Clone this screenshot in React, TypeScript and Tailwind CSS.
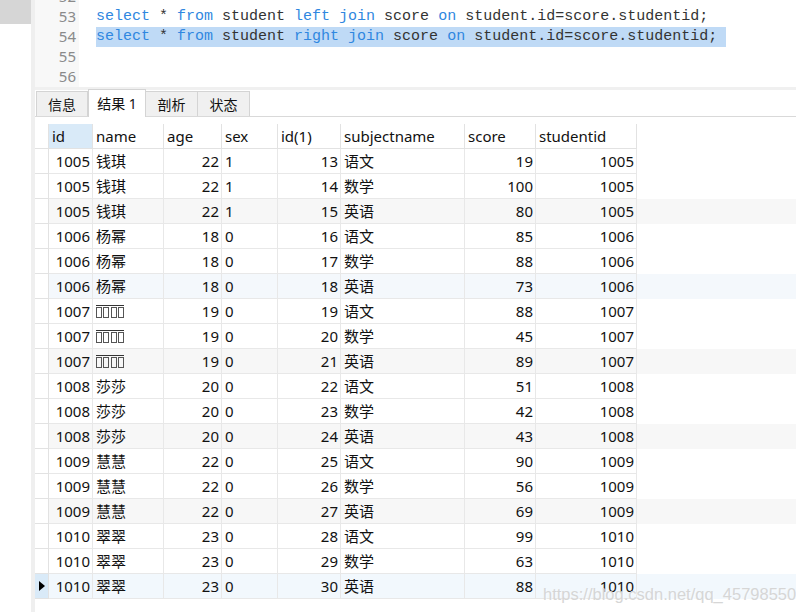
import React from "react";

type Row = [string, string, string, string, string, string, string, string];

const rows: Row[] = [
  ["1005", "钱琪", "22", "1", "13", "语文", "19", "1005"],
  ["1005", "钱琪", "22", "1", "14", "数学", "100", "1005"],
  ["1005", "钱琪", "22", "1", "15", "英语", "80", "1005"],
  ["1006", "杨幂", "18", "0", "16", "语文", "85", "1006"],
  ["1006", "杨幂", "18", "0", "17", "数学", "88", "1006"],
  ["1006", "杨幂", "18", "0", "18", "英语", "73", "1006"],
  ["1007", "?", "19", "0", "19", "语文", "88", "1007"],
  ["1007", "?", "19", "0", "20", "数学", "45", "1007"],
  ["1007", "?", "19", "0", "21", "英语", "89", "1007"],
  ["1008", "莎莎", "20", "0", "22", "语文", "51", "1008"],
  ["1008", "莎莎", "20", "0", "23", "数学", "42", "1008"],
  ["1008", "莎莎", "20", "0", "24", "英语", "43", "1008"],
  ["1009", "慧慧", "22", "0", "25", "语文", "90", "1009"],
  ["1009", "慧慧", "22", "0", "26", "数学", "56", "1009"],
  ["1009", "慧慧", "22", "0", "27", "英语", "69", "1009"],
  ["1010", "翠翠", "23", "0", "28", "语文", "99", "1010"],
  ["1010", "翠翠", "23", "0", "29", "数学", "63", "1010"],
  ["1010", "翠翠", "23", "0", "30", "英语", "88", "1010"],
];

const cols = [
  { name: "id", w: "w-[44px]", right: true },
  { name: "name", w: "w-[71px]", right: false },
  { name: "age", w: "w-[58px]", right: true },
  { name: "sex", w: "w-[56px]", right: false },
  { name: "id(1)", w: "w-[63px]", right: true },
  { name: "subjectname", w: "w-[124px]", right: false },
  { name: "score", w: "w-[71px]", right: true },
  { name: "studentid", w: "w-[101px]", right: true },
];

function Tofu() {
  return (
    <span className="inline-flex items-start gap-[2px] border-t border-[#333] pt-[1px] mt-[1px] align-middle">
      <span className="flex gap-[1px]">
        <span className="w-[6px] h-[11px] border border-[#555]" />
        <span className="w-[6px] h-[11px] border border-[#555]" />
      </span>
      <span className="flex gap-[1px]">
        <span className="w-[6px] h-[11px] border border-[#555]" />
        <span className="w-[6px] h-[11px] border border-[#555]" />
      </span>
    </span>
  );
}

const KW = ({ children }: { children: React.ReactNode }) => (
  <span className="text-[#2f87e0]">{children}</span>
);

export default function App() {
  const font = { fontFamily: '"Noto Sans", "Noto Sans CJK SC", sans-serif' };
  return (
    <div className="relative w-[796px] h-[612px] overflow-hidden bg-white flex" style={font}>
      {/* far left */}
      <div className="w-[31px] flex flex-col">
        <div className="h-[24px] bg-[#d6d6d6]" />
      </div>
      <div className="w-[4px] bg-[#efefef]" />
      <div className="flex-1 flex flex-col">
        {/* editor */}
        <div className="h-[87px] flex overflow-hidden">
          <div className="w-[44px] bg-[#f8f8f8] text-[#8a8a8a] text-[15px] leading-[20px] text-right pr-[3px]">
            <div className="-mt-[14px]">
              <div>52</div>
              <div>53</div>
              <div>54</div>
              <div>55</div>
              <div>56</div>
            </div>
          </div>
          <div
            className="flex-1 pl-[17px] text-[15px] leading-[20px] text-[#333] whitespace-pre"
            style={{ fontFamily: '"Liberation Mono", monospace' }}
          >
            <div className="-mt-[13px]">
              <div>&nbsp;</div>
              <div>
                <KW>select</KW> * <KW>from</KW> student <KW>left</KW> <KW>join</KW> score <KW>on</KW> student.id=score.studentid;
              </div>
              <div>
                <span className="bg-[#bfdaf6] pr-[9px] inline-block">
                  <KW>select</KW> * <KW>from</KW> student <KW>right</KW> <KW>join</KW> score <KW>on</KW> student.id=score.studentid;
                </span>
              </div>
              <div>&nbsp;</div>
              <div>&nbsp;</div>
            </div>
          </div>
        </div>
        <div className="h-[3px] bg-[#f0f0f0]" />
        {/* tabs */}
        <div className="h-[27px] flex items-end border-b border-[#d9d9d9] pl-[1px] text-[14px] text-[#111]">
          <div className="w-[52px] h-[25px] bg-[#f0f0f0] border border-b-0 border-[#d4d4d4] flex items-center justify-center">信息</div>
          <div className="w-[58px] bg-white border border-b-0 border-[#d4d4d4] -mb-[1px] h-[28px] flex items-center justify-center">结果 1</div>
          <div className="w-[52px] h-[25px] bg-[#f0f0f0] border border-b-0 border-l-0 border-[#d4d4d4] flex items-center justify-center">剖析</div>
          <div className="w-[52px] h-[25px] bg-[#f0f0f0] border border-b-0 border-l-0 border-[#d4d4d4] flex items-center justify-center">状态</div>
        </div>
        <div className="h-[7px]" />
        {/* grid */}
        <div className="flex flex-col text-[15px] text-[#111]">
          <div className="flex h-[25px]">
            <div className="w-[14px] border-r border-b border-[#e2e2e2]" />
            {cols.map((c, i) => (
              <div
                key={c.name}
                className={`${c.w} border-r border-b border-[#e2e2e2] pl-[3px] flex items-center ${i === 0 ? "bg-[#d9eaf8]" : ""}`}
              >
                {c.name}
              </div>
            ))}
          </div>
          {rows.map((r, ri) => {
            const last = ri === rows.length - 1;
            const tint = last ? "bg-[#f2f8fd]" : ri === 5 ? "bg-[#f4f8fc]" : (ri + 1) % 3 === 0 ? "bg-[#f7f7f7]" : "";
            return (
              <div key={ri} className={`flex h-[25px] ${tint}`}>
                <div className={`w-[14px] border-r border-b border-[#e2e2e2] flex items-center justify-center ${last ? "bg-[#d9eaf8]" : "bg-white"}`}>
                  {last && (
                    <svg width="6" height="10" viewBox="0 0 6 10">
                      <path d="M0 0 L6 5 L0 10 Z" fill="#000" />
                    </svg>
                  )}
                </div>
                {cols.map((c, ci) => (
                  <div
                    key={ci}
                    className={`${c.w} border-r border-b border-[#e8e8e8] flex items-center ${c.right ? "justify-end pr-[2px]" : "pl-[3px]"}`}
                  >
                    {ci === 1 && r[1] === "?" ? <Tofu /> : r[ci]}
                  </div>
                ))}
              </div>
            );
          })}
        </div>
      </div>
      <div
        className="absolute left-[543px] top-[582px] text-[16.5px] text-[#d6d6d6] whitespace-nowrap"
        style={{ fontFamily: '"Liberation Sans", Arial, sans-serif', textShadow: "1px 1px 0 rgba(255,255,255,0.6)" }}
      >
        https://blog.csdn.net/qq_45798550
      </div>
    </div>
  );
}
